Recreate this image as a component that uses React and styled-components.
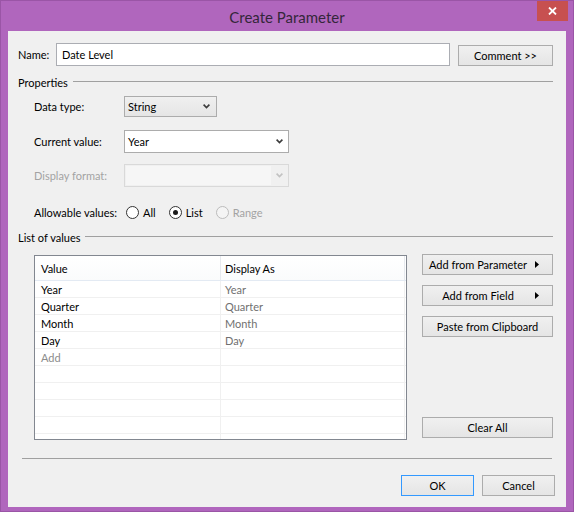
import React from 'react';
import styled, { createGlobalStyle } from 'styled-components';

const FONT = `Lato, "Open Sans", "Liberation Sans", sans-serif`;

const GlobalStyle = createGlobalStyle`
  html, body {
    margin: 0;
    padding: 0;
    background: #b066bd;
  }
  * {
    box-sizing: border-box;
  }
`;

const Window = styled.div`
  width: 574px;
  height: 512px;
  background: #b066bd;
  border: 1px solid #9a55a6;
  display: flex;
  flex-direction: column;
  font-family: ${FONT};
  font-size: 11px;
  color: #000;
`;

const TitleBar = styled.div`
  height: 30px;
  display: grid;
  grid-template-columns: 1fr auto 1fr;
  align-items: center;
`;

const Title = styled.div`
  grid-column: 2;
  font-size: 15px;
  color: #34263a;
  padding-top: 1px;
`;

const CloseButton = styled.div`
  grid-column: 3;
  justify-self: end;
  align-self: start;
  width: 31px;
  height: 20px;
  margin-right: 5px;
  background: #c75050;
  display: flex;
  align-items: center;
  justify-content: center;
`;

const Body = styled.div`
  flex: 1;
  margin: 0 7px 4px;
  background: #f0f0f0;
  padding: 12px 13px 0 10px;
  display: flex;
  flex-direction: column;
`;

const NameRow = styled.div`
  display: flex;
  align-items: center;
  height: 23px;
`;

const NameLabel = styled.span`
  width: 38px;
`;

const TextInput = styled.div`
  width: 394px;
  height: 23px;
  border: 1px solid #abadb3;
  background: #fff;
  padding-left: 5px;
  display: flex;
  align-items: center;
`;

const Button = styled.div`
  width: ${p => p.$w || 131}px;
  height: 21px;
  border: 1px solid ${p => (p.$primary ? '#3399ff' : '#acacac')};
  background: linear-gradient(#f0f0f0, #e5e5e5);
  display: flex;
  align-items: center;
  justify-content: center;
  flex-shrink: 0;
`;

const CommentButton = styled(Button)`
  margin-left: 8px;
  margin-top: 2px;
`;

const GroupHeader = styled.div`
  display: flex;
  align-items: center;
  height: 16px;
  margin-top: ${p => p.$mt}px;
`;

const GroupLine = styled.div`
  flex: 1;
  height: 1px;
  background: #a0a0a0;
  margin-left: 5px;
  margin-top: -1px;
`;

const FieldRow = styled.div`
  display: flex;
  align-items: center;
  padding-left: 16px;
  margin-top: ${p => p.$mt}px;
`;

const FieldLabel = styled.span`
  width: 90px;
  color: ${p => (p.$disabled ? '#a3a3a3' : '#000')};
`;

const Select = styled.div`
  width: ${p => p.$w}px;
  height: ${p => p.$h}px;
  border: 1px solid ${p => (p.$variant === 'disabled' ? '#d9d9d9' : '#acacac')};
  background: ${p =>
    p.$variant === 'button'
      ? 'linear-gradient(#f0f0f0, #e5e5e5)'
      : p.$variant === 'disabled'
      ? '#f0f0f0'
      : '#fff'};
  display: flex;
  align-items: center;
  padding-left: 3px;
`;

const SelectValue = styled.span`
  flex: 1;
  align-self: stretch;
  display: flex;
  align-items: center;
  margin: ${p => (p.$disabled ? '1px 0 1px -2px' : '0')};
  background: ${p => (p.$disabled ? '#f6f6f6' : 'transparent')};
`;

const SelectArrow = styled.span`
  width: ${p => p.$w || 17}px;
  display: flex;
  justify-content: center;
`;

const RadioGroup = styled.div`
  display: flex;
  align-items: center;
  gap: 13px;
  margin-left: 2px;
`;

const RadioItem = styled.label`
  display: flex;
  align-items: center;
  gap: 4px;
  height: 16px;
  color: ${p => (p.$disabled ? '#a3a3a3' : '#000')};
`;

const RadioCircle = styled.span`
  width: 13px;
  height: 13px;
  border-radius: 50%;
  border: 1px solid ${p => (p.$disabled ? '#bcbcbc' : '#333')};
  background: ${p => (p.$disabled ? '#f4f4f4' : '#fff')};
  display: flex;
  align-items: center;
  justify-content: center;
  &::after {
    content: '';
    width: 5px;
    height: 5px;
    border-radius: 50%;
    background: #1a1a1a;
    display: ${p => (p.$checked ? 'block' : 'none')};
  }
`;

const ListArea = styled.div`
  display: flex;
  padding-left: 16px;
  margin-top: 10px;
`;

const TableBox = styled.div`
  width: 373px;
  height: 185px;
  border: 1px solid #828790;
  background: #fff;
  overflow: hidden;
`;

const Row = styled.div`
  display: grid;
  grid-template-columns: 186px 184px;
  height: ${p => (p.$header ? 25 : 17)}px;
  border-bottom: 1px solid ${p => (p.$header ? '#e3eaf3' : '#f0f0f0')};
  background: ${p => (p.$header ? 'linear-gradient(#ffffff, #fafbfc)' : '#fff')};
`;

const Cell = styled.div`
  display: flex;
  align-items: center;
  padding-left: ${p => (p.$first ? 6 : 4)}px;
  border-right: 1px solid ${p => (p.$header ? '#e6e9ee' : '#f0f0f0')};
  color: ${p => p.$color || '#000'};
`;

const SideButtons = styled.div`
  width: 131px;
  margin: -1px 0 2px 15px;
  display: flex;
  flex-direction: column;
  gap: 10px;
`;

const MenuButton = styled(Button)`
  justify-content: flex-start;
`;

const MenuLabel = styled.span`
  flex: 1;
  text-align: center;
  padding-left: 2px;
`;

const MenuArrow = styled.span`
  width: 21px;
  display: flex;
  padding-left: 4px;
`;

const ClearButton = styled(Button)`
  margin-top: auto;
`;

const Separator = styled.div`
  height: 1px;
  background: #a0a0a0;
  margin: 18px 1px 0 4px;
`;

const Footer = styled.div`
  display: flex;
  justify-content: flex-end;
  gap: 8px;
  margin: 16px -2px 0 0;
`;

const Chevron = ({ color = '#3c3c3c' }) => (
  <svg width="7" height="5" viewBox="0 0 7 5">
    <path d="M0.6 0.6 L3.5 3.6 L6.4 0.6" fill="none" stroke={color} strokeWidth="1.6" />
  </svg>
);

const Triangle = () => (
  <svg width="4" height="7" viewBox="0 0 4 7">
    <path d="M0 0 L4 3.5 L0 7 Z" fill="#000" />
  </svg>
);

const CloseIcon = () => (
  <svg width="9" height="8" viewBox="0 0 9 8">
    <path d="M1 0.5 L8 7.5 M8 0.5 L1 7.5" stroke="#fff" strokeWidth="1.8" />
  </svg>
);

const values = [
  { value: 'Year', display: 'Year' },
  { value: 'Quarter', display: 'Quarter' },
  { value: 'Month', display: 'Month' },
  { value: 'Day', display: 'Day' },
];

export default function App() {
  return (
    <>
      <GlobalStyle />
      <Window>
        <TitleBar>
          <Title>Create Parameter</Title>
          <CloseButton>
            <CloseIcon />
          </CloseButton>
        </TitleBar>
        <Body>
          <NameRow>
            <NameLabel>Name:</NameLabel>
            <TextInput>Date Level</TextInput>
            <CommentButton $w={95}>Comment &gt;&gt;</CommentButton>
          </NameRow>

          <GroupHeader $mt={8}>
            <span>Properties</span>
            <GroupLine />
          </GroupHeader>

          <FieldRow $mt={6}>
            <FieldLabel>Data type:</FieldLabel>
            <Select $w={93} $h={21} $variant="button">
              <SelectValue>String</SelectValue>
              <SelectArrow $w={19}>
                <Chevron />
              </SelectArrow>
            </Select>
          </FieldRow>

          <FieldRow $mt={13}>
            <FieldLabel>Current value:</FieldLabel>
            <Select $w={165} $h={23}>
              <SelectValue>Year</SelectValue>
              <SelectArrow>
                <Chevron />
              </SelectArrow>
            </Select>
          </FieldRow>

          <FieldRow $mt={11}>
            <FieldLabel $disabled>Display format:</FieldLabel>
            <Select $w={165} $h={23} $variant="disabled">
              <SelectValue $disabled />
              <SelectArrow>
                <Chevron color="#c2c2c2" />
              </SelectArrow>
            </Select>
          </FieldRow>

          <FieldRow $mt={17}>
            <FieldLabel>Allowable values:</FieldLabel>
            <RadioGroup>
              <RadioItem>
                <RadioCircle />
                All
              </RadioItem>
              <RadioItem>
                <RadioCircle $checked />
                List
              </RadioItem>
              <RadioItem $disabled>
                <RadioCircle $disabled />
                Range
              </RadioItem>
            </RadioGroup>
          </FieldRow>

          <GroupHeader $mt={9}>
            <span>List of values</span>
            <GroupLine />
          </GroupHeader>

          <ListArea>
            <TableBox>
              <Row $header>
                <Cell $header $first>Value</Cell>
                <Cell $header>Display As</Cell>
              </Row>
              {values.map(v => (
                <Row key={v.value}>
                  <Cell $first>{v.value}</Cell>
                  <Cell $color="#707070">{v.display}</Cell>
                </Row>
              ))}
              <Row>
                <Cell $first $color="#8c8c8c">Add</Cell>
                <Cell />
              </Row>
              {[0, 1, 2, 3, 4, 5].map(i => (
                <Row key={i}>
                  <Cell $first />
                  <Cell />
                </Row>
              ))}
            </TableBox>
            <SideButtons>
              <MenuButton>
                <MenuLabel>Add from Parameter</MenuLabel>
                <MenuArrow>
                  <Triangle />
                </MenuArrow>
              </MenuButton>
              <MenuButton>
                <MenuLabel>Add from Field</MenuLabel>
                <MenuArrow>
                  <Triangle />
                </MenuArrow>
              </MenuButton>
              <Button>Paste from Clipboard</Button>
              <ClearButton>Clear All</ClearButton>
            </SideButtons>
          </ListArea>

          <Separator />

          <Footer>
            <Button $w={73} $primary>OK</Button>
            <Button $w={73}>Cancel</Button>
          </Footer>
        </Body>
      </Window>
    </>
  );
}
